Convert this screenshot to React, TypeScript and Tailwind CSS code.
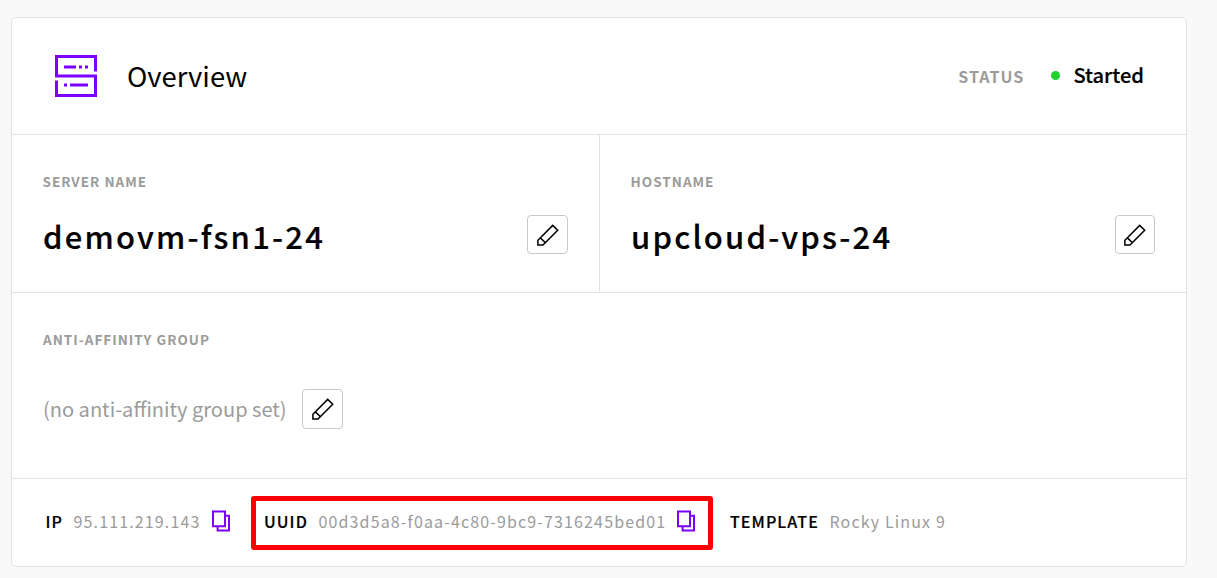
function ServerIcon() {
  return (
    <svg width="42" height="42" viewBox="0 0 42 42" fill="none" stroke="#7b00ff" strokeWidth="3" className="shrink-0">
      <path d="M40.5 16.5V1.5H1.5V21H40.5V40.5H1.5V25.5" />
      <path d="M9 12H21M24 12H27M30 12H33M9 30H12M15 30H33" />
    </svg>
  );
}

function CopyIcon() {
  return (
    <svg width="18" height="22" viewBox="0 0 18 22" fill="none" stroke="#7b00ff" strokeWidth="2" className="shrink-0">
      <path d="M1 1.4H13V16.2H1Z" />
      <path d="M13 5.7H17V20.6H5.6V16.2" />
    </svg>
  );
}

function EditButton({ size = "h-[39px] w-[41px]" }: { size?: string }) {
  return (
    <button className={`flex shrink-0 justify-center rounded-[4px] border border-[#c9c9c9] bg-white pt-2 ${size}`}>
      <svg width="22" height="22" viewBox="0 0 22 22" fill="none" stroke="#000" strokeWidth="1.5">
        <path d="M.9 21.1V16.3L15.7 1.4L20.7 6.3L6 21.1ZM3.3 13.9L8.5 18.7" />
      </svg>
    </button>
  );
}

function Label({ children }: { children: string }) {
  return <div className="text-[13.5px] leading-5 font-bold tracking-[1.02px] text-[#9b9b9b]">{children}</div>;
}

function NameCell({ label, value, buttonSize }: { label: string; value: string; buttonSize?: string }) {
  return (
    <div className="pt-9 pr-[31px] pl-[30.5px]">
      <Label>{label}</Label>
      <div className="mt-6 flex items-start justify-between">
        <span className="pt-px pl-[0.5px] text-[31px] leading-10 font-medium tracking-[2.2px] [-webkit-text-stroke:0.2px_#000]">{value}</span>
        <EditButton size={buttonSize} />
      </div>
    </div>
  );
}

const term = "font-medium tracking-[1.08px] [-webkit-text-stroke:0.2px_#000]";
const detail = "tracking-[1.14px] text-[#9b9b9b]";

export default function App() {
  return (
    <div className="h-[578px] w-full overflow-hidden bg-[#f9f9f9] pt-[17px] pl-[11px] font-['Noto_Sans_CJK_SC','Noto_Sans',sans-serif] text-black">
      <div className="flex h-[550px] w-[1176px] flex-col rounded-[5px] border border-[#e2e2e2] bg-white whitespace-nowrap">
        <header className="flex h-[117px] items-center border-b border-[#e2e2e2] pr-[42px] pl-[43px]">
          <ServerIcon />
          <h1 className="ml-[30px] pb-0.5 text-[27.4px] leading-10">Overview</h1>
          <span className="ml-auto text-[16px] leading-6 font-bold tracking-[1.08px] text-[#9b9b9b]">STATUS</span>
          <span className="mr-[13px] mb-0.5 ml-[27px] size-[9px] rounded-full bg-[#1fd12f]" />
          <span className="pb-0.5 text-[20.1px] leading-6 font-medium [-webkit-text-stroke:0.2px_#000]">Started</span>
        </header>
        <section className="grid h-[158px] grid-cols-[588px_1fr] border-b border-[#e2e2e2]">
          <div className="border-r border-[#e2e2e2]">
            <NameCell label="SERVER NAME" value="demovm-fsn1-24" />
          </div>
          <NameCell label="HOSTNAME" value="upcloud-vps-24" buttonSize="h-[39px] w-10" />
        </section>
        <section className="h-[186px] border-b border-[#e2e2e2] px-[31px] pt-9">
          <Label>ANTI-AFFINITY GROUP</Label>
          <div className="mt-10 flex items-start">
            <span className="w-[259px] text-[20.05px] leading-10 text-[#9b9b9b]">(no anti-affinity group set)</span>
            <EditButton size="h-10 w-[41px]" />
          </div>
        </section>
        <footer className="flex items-start pt-[17px] pl-[33.5px] text-[16px] leading-6">
          <div className="flex h-[54px] w-[205.5px] items-center pb-1">
            <span className={`w-7 ${term}`}>IP</span>
            <span className={`w-[138.5px] ${detail}`}>95.111.219.143</span>
            <CopyIcon />
          </div>
          <div className="flex h-[54px] w-[462px] items-center rounded-[3px] border-5 border-[#ff0000] pb-1 pl-2">
            <span className={`w-[54.5px] ${term}`}>UUID</span>
            <span className={`w-[358.5px] ${detail}`}>00d3d5a8-f0aa-4c80-9bc9-7316245bed01</span>
            <CopyIcon />
          </div>
          <div className="flex h-[54px] items-center pb-1 pl-[17px]">
            <span className={`w-[99.5px] ${term}`}>TEMPLATE</span>
            <span className={detail}>Rocky Linux 9</span>
          </div>
        </footer>
      </div>
    </div>
  );
}
